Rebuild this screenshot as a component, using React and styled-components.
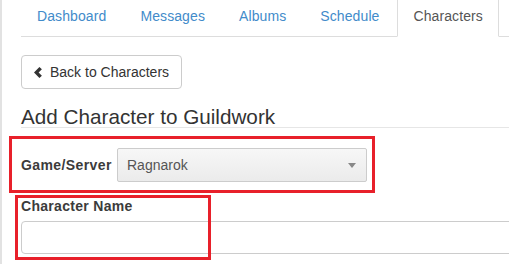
import React from 'react'
import styled, { createGlobalStyle } from 'styled-components'

const GlobalStyle = createGlobalStyle`
  html, body {
    margin: 0;
    padding: 0;
    background: #fff;
    overflow: hidden;
  }
  body {
    font-family: "Liberation Sans", Arial, sans-serif;
    font-size: 14px;
    line-height: 20px;
    color: #333;
  }
`

const tabs = ['Dashboard', 'Messages', 'Albums', 'Schedule', 'Characters']

export default function App() {
  return (
    <>
      <GlobalStyle />
      <Page>
        <Tabs>
          {tabs.map((t) => (
            <Tab key={t}>
              <TabLink active={t === 'Characters'}>{t}</TabLink>
            </Tab>
          ))}
        </Tabs>

        <BackButton>
          <svg width="8" height="11" viewBox="0 0 8 11">
            <path d="M5.4 0 L7.9 2.2 L4.6 5.5 L7.9 8.8 L5.4 11 L0 5.5 Z" fill="#333" />
          </svg>
          Back to Characters
        </BackButton>

        <Heading>Add Character to Guildwork</Heading>

        <InlineGroup>
          <Label>Game/Server</Label>
          <Select>
            <span>Ragnarok</span>
            <Caret />
          </Select>
          <Highlight top={-12} left={-12} right={-8} bottom={-11} />
        </InlineGroup>

        <StackGroup>
          <Label>Character Name</Label>
          <Input />
          <Highlight top={-1} left={-6} width={196} bottom={-6} />
        </StackGroup>
      </Page>
    </>
  )
}

const Page = styled.div`
  box-sizing: border-box;
  width: 100%;
  min-height: 264px;
  overflow: hidden;
  border-left: 2px solid #e2e2e2;
  padding-left: 19px;
`

const Tabs = styled.ul`
  display: flex;
  list-style: none;
  margin: 0;
  padding: 0;
  border-bottom: 1px solid #ddd;
`

const Tab = styled.li`
  margin-right: 2px;
  margin-bottom: -1px;
`

const TabLink = styled.a`
  display: block;
  padding: 6px 15px 10px;
  border: 1px solid transparent;
  border-top: 0;
  letter-spacing: 0.1px;
  color: ${(p) => (p.active ? '#555' : '#428bca')};
  background: ${(p) => (p.active ? '#fff' : 'transparent')};
  border-color: ${(p) => (p.active ? '#ddd #ddd transparent' : 'transparent')};
  cursor: pointer;
`

const BackButton = styled.button`
  display: flex;
  align-items: center;
  gap: 8px;
  margin-top: 18px;
  height: 34px;
  padding: 0 12px;
  border: 1px solid #ccc;
  border-radius: 4px;
  background: #fff;
  color: #333;
  font-family: inherit;
  font-size: 14px;
  svg {
    margin-top: 1px;
  }
`

const Heading = styled.h3`
  margin: 17px 0 0;
  font-size: 20.7px;
  font-weight: 400;
  line-height: 21px;
  color: #333;
  border-bottom: 1px solid #e6e6e6;
`

const InlineGroup = styled.div`
  position: relative;
  display: flex;
  align-items: center;
  justify-content: space-between;
  width: 346px;
  margin-top: 20px;
`

const StackGroup = styled.div`
  position: relative;
  display: flex;
  flex-direction: column;
  margin-top: 14px;
`

const Label = styled.label`
  display: block;
  font-weight: 700;
  letter-spacing: 0.3px;
  color: #3b3b3b;
  margin-bottom: 5px;
  ${InlineGroup} & {
    margin-bottom: 0;
    letter-spacing: 0.4px;
  }
`

const Select = styled.div`
  box-sizing: border-box;
  display: flex;
  align-items: center;
  justify-content: space-between;
  width: 250px;
  height: 34px;
  padding: 0 9px;
  border: 1px solid #ccc;
  border-radius: 2px;
  background: linear-gradient(#f7f7f7, #ebebeb);
  color: #555;
`

const Caret = styled.span`
  width: 0;
  height: 0;
  margin-right: 1px;
  border-left: 4px solid transparent;
  border-right: 4px solid transparent;
  border-top: 5px solid #888;
`

const Input = styled.div`
  box-sizing: border-box;
  height: 33px;
  width: calc(100% + 40px);
  border: 1px solid #ccc;
  border-radius: 4px;
  background: #fff;
`

const Highlight = styled.div`
  position: absolute;
  top: ${(p) => p.top}px;
  left: ${(p) => p.left}px;
  ${(p) => (p.right !== undefined ? `right: ${p.right}px;` : '')}
  ${(p) => (p.width ? `width: ${p.width}px;` : '')}
  bottom: ${(p) => p.bottom}px;
  box-sizing: border-box;
  border: 3px solid #e8202a;
  pointer-events: none;
`
